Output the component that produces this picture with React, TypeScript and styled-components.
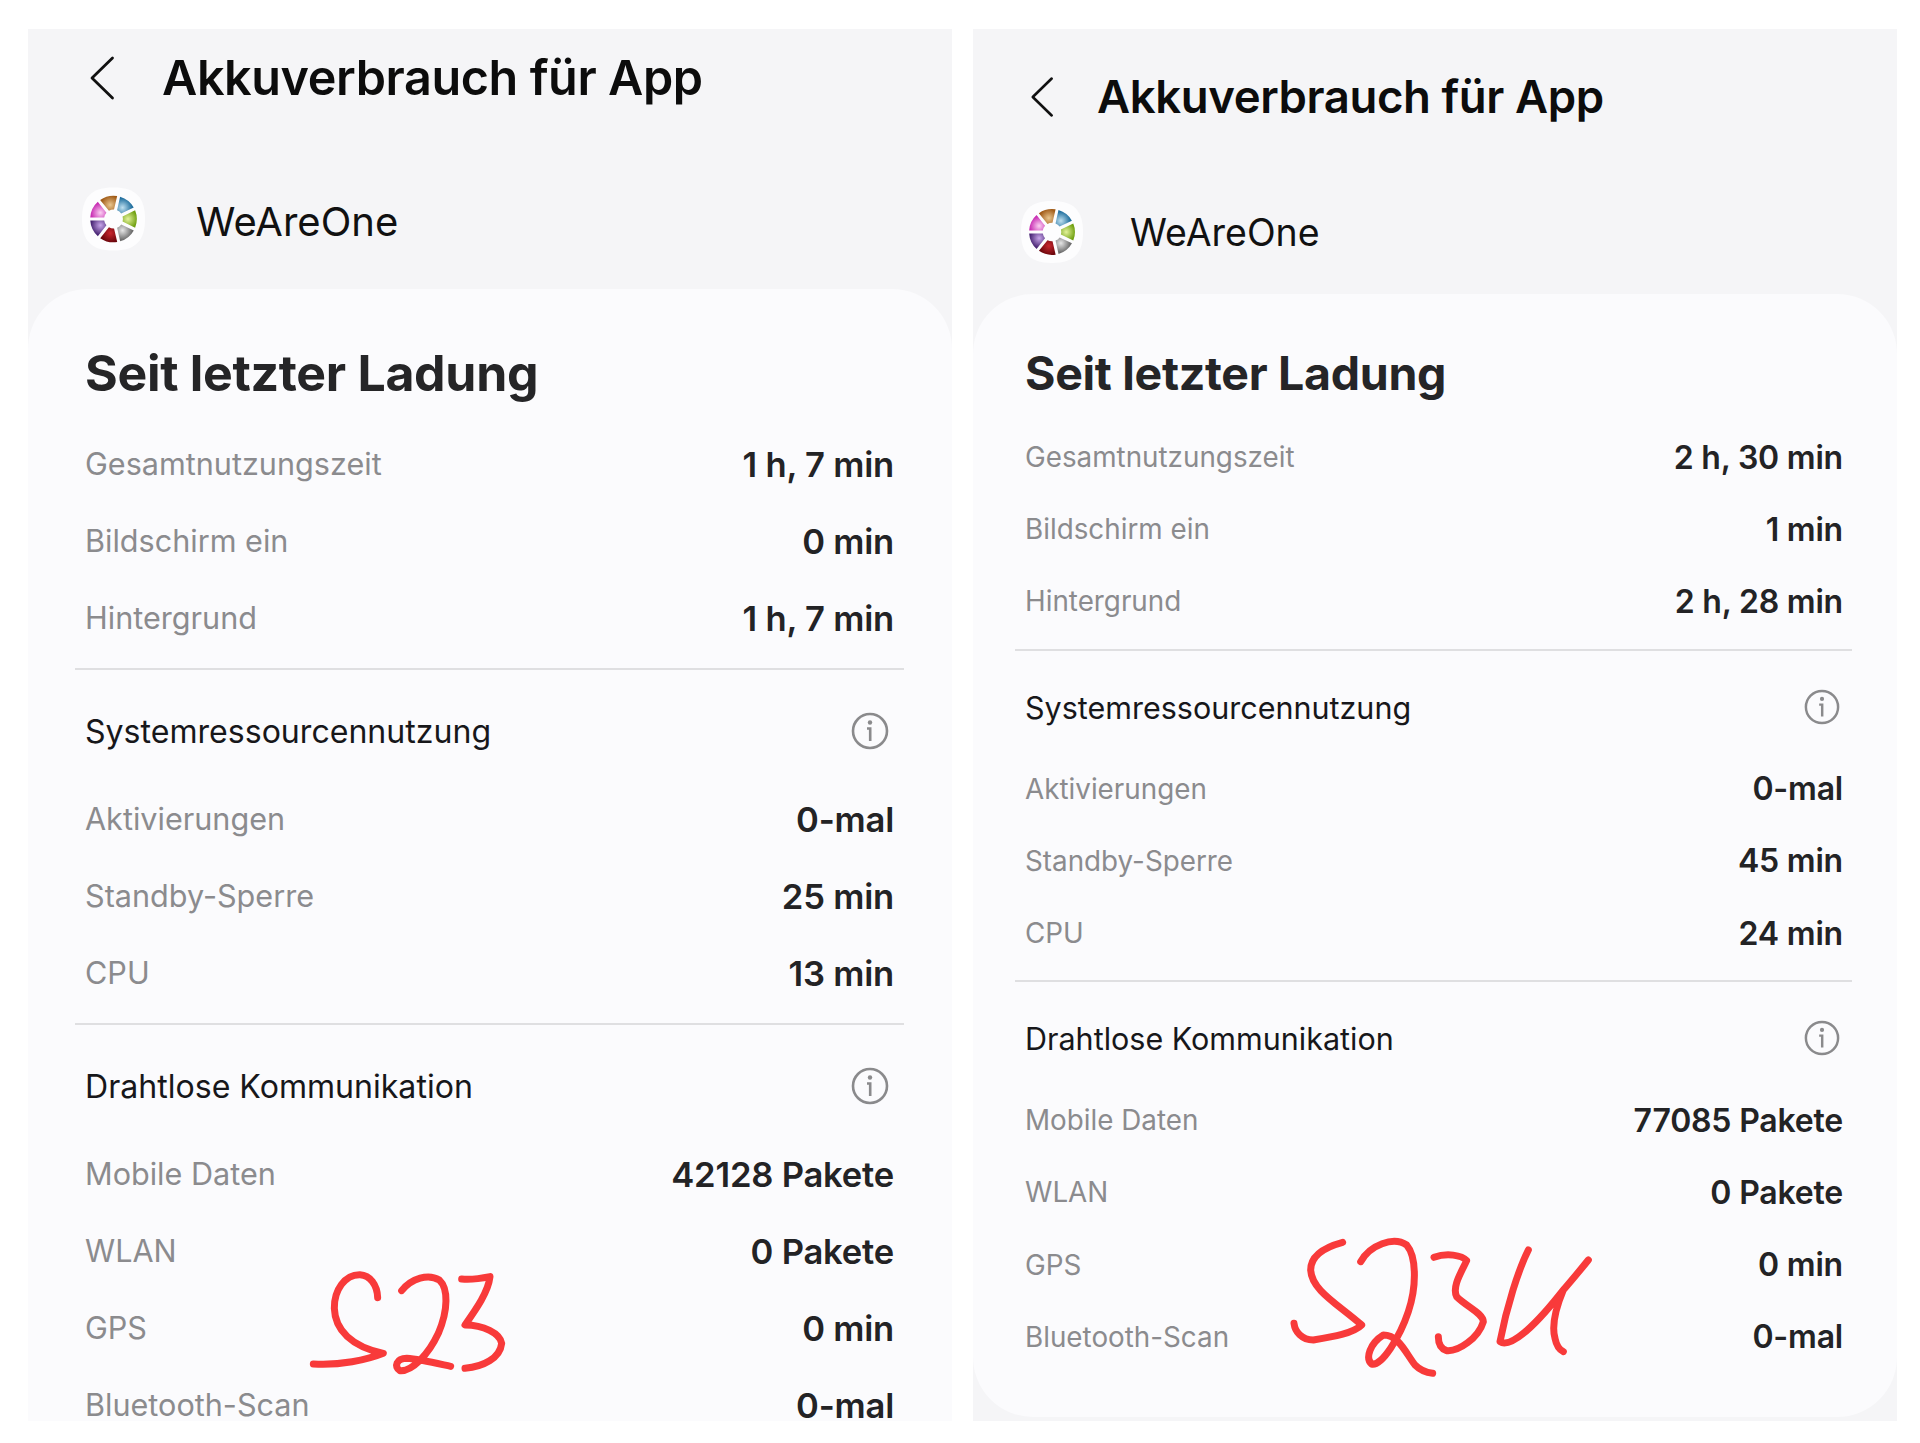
import React from "react";
import styled, { createGlobalStyle, ThemeProvider } from "styled-components";

const Global = createGlobalStyle`
  html, body { margin: 0; padding: 0; background: #fff; }
  body { font-family: Inter, "Noto Sans", sans-serif; }
`;

const left = {
  panelWidth: 924, headerH: 98, backPad: 61, backW: 26, backH: 44, backGap: 47,
  titleSize: 48.5, appH: 162, appTop: 60, appLeft: 54, iconW: 63, iconH: 64, appGap: 51, appSize: 40, nameDy: 3,
  cardPadL: 57, cardPadR: 58, cardTop: 54, bigSize: 50,
  rowsTop: 22, rowH: 77, rowSize: 30.6, valueSize: 34.6, dividerL: 10, dividerR: 10,
  divTop: 12, sectionTop: 38, sectionH: 110, sectionSize: 32.1, infoR: 5, infoSize: 38,
  cardH: 1140, bottomR: 0,
};
const right = {
  panelWidth: 924, headerH: 136, backPad: 57, backW: 24, backH: 42, backGap: 43,
  titleSize: 45.5, appH: 129, appTop: 36, appLeft: 48, iconW: 62, iconH: 62, appGap: 47, appSize: 37.5, nameDy: 1,
  cardPadL: 52, cardPadR: 54, cardTop: 49, bigSize: 46.5,
  rowsTop: 18, rowH: 72.2, rowSize: 27.8, valueSize: 32, dividerL: 10, dividerR: 9,
  divTop: 11, sectionTop: 33, sectionH: 102, sectionSize: 30.5, infoR: 3, infoSize: 36,
  cardH: 1123, bottomR: 60,
};

const Page = styled.main`
  display: flex;
  gap: 21px;
  width: 1920px;
  height: 1443px;
  padding: 29px 0 0 28px;
  box-sizing: border-box;
  background: #fff;
  overflow: hidden;
`;
const Panel = styled.section`
  position: relative;
  width: ${(p) => p.theme.panelWidth}px;
  height: 1392px;
  flex: none;
  background: #f5f5f7;
  overflow: hidden;
`;
const Header = styled.header`
  display: flex;
  align-items: center;
  height: ${(p) => p.theme.headerH}px;
  padding-left: ${(p) => p.theme.backPad}px;
  gap: ${(p) => p.theme.backGap}px;
`;
const BackIcon = styled.svg`
  width: ${(p) => p.theme.backW}px;
  height: ${(p) => p.theme.backH}px;
  flex: none;
`;
const Title = styled.h1`
  margin: 0;
  font-size: ${(p) => p.theme.titleSize}px;
  line-height: 60px;
  font-weight: 600;
  letter-spacing: -0.4px;
  color: #0c0c0c;
`;
const AppRow = styled.div`
  display: flex;
  align-items: flex-start;
  box-sizing: border-box;
  height: ${(p) => p.theme.appH}px;
  padding: ${(p) => p.theme.appTop}px 0 0 ${(p) => p.theme.appLeft}px;
  gap: ${(p) => p.theme.appGap}px;
`;
const AppIcon = styled.svg`
  width: ${(p) => p.theme.iconW}px;
  height: ${(p) => p.theme.iconH}px;
  flex: none;
`;
const AppName = styled.span`
  padding-top: ${(p) => p.theme.nameDy}px;
  font-size: ${(p) => p.theme.appSize}px;
  line-height: ${(p) => p.theme.iconH}px;
  color: #111;
`;
const Card = styled.div`
  box-sizing: border-box;
  height: ${(p) => p.theme.cardH}px;
  padding: ${(p) => p.theme.cardTop}px ${(p) => p.theme.cardPadR}px 0 ${(p) => p.theme.cardPadL}px;
  background: #fbfbfd;
  border-radius: 60px 60px ${(p) => p.theme.bottomR}px ${(p) => p.theme.bottomR}px;
`;
const CardTitle = styled.h2`
  margin: 0 0 ${(p) => p.theme.rowsTop}px;
  font-size: ${(p) => p.theme.bigSize}px;
  line-height: 60px;
  font-weight: 700;
  letter-spacing: -0.3px;
  color: #252527;
`;
const Row = styled.div`
  display: flex;
  align-items: center;
  justify-content: space-between;
  height: ${(p) => p.theme.rowH}px;
`;
const Label = styled.span`
  font-size: ${(p) => p.theme.rowSize}px;
  color: #8b8b8e;
`;
const Value = styled.span`
  font-size: ${(p) => p.theme.valueSize}px;
  font-weight: 600;
  letter-spacing: -0.2px;
  color: #232325;
`;
const Divider = styled.hr`
  height: 2px;
  border: 0;
  background: #dfdfe1;
  margin: ${(p) => p.theme.divTop}px -${(p) => p.theme.dividerR}px 0 -${(p) => p.theme.dividerL}px;
`;
const SectionHead = styled.div`
  display: flex;
  align-items: flex-start;
  justify-content: space-between;
  box-sizing: border-box;
  height: ${(p) => p.theme.sectionH}px;
  padding: ${(p) => p.theme.sectionTop}px ${(p) => p.theme.infoR}px 0 0;
`;
const SectionName = styled.span`
  font-size: ${(p) => p.theme.sectionSize}px;
  line-height: 48px;
  color: #17171a;
`;
const InfoIcon = styled.svg`
  width: ${(p) => p.theme.infoSize}px;
  height: 48px;
  margin-top: -1px;
  flex: none;
`;
const Scribble = styled.svg`
  position: absolute;
  left: ${(p) => p.$x}px;
  top: ${(p) => p.$y}px;
  width: ${(p) => p.$w}px;
  height: ${(p) => p.$h}px;
  fill: none;
  stroke: #f83a3a;
  stroke-linecap: round;
  stroke-linejoin: round;
`;

const wedges = [
  { a: 0, light: "#e3f29a", dark: "#6f9f10" },
  { a: 51.4, light: "#e6e6e6", dark: "#6e6e6e" },
  { a: 102.8, light: "#c8262e", dark: "#6c060c" },
  { a: 154.2, light: "#c8a6ea", dark: "#4a2775" },
  { a: 205.6, light: "#fbd0f2", dark: "#c92fb4" },
  { a: 257, light: "#e9c68e", dark: "#a05a16" },
  { a: 308.4, light: "#bfe0f0", dark: "#22709f" },
];

const polar = (r: number, deg: number) => {
  const t = (deg * Math.PI) / 180;
  return `${(100 + r * Math.cos(t)).toFixed(1)} ${(100 + r * Math.sin(t)).toFixed(1)}`;
};
const wedgePath = (a: number) => {
  const h = 22;
  return `M${polar(30, a - h + 6)} L${polar(74, a - h)} A74 74 0 0 1 ${polar(74, a + h)} L${polar(30, a + h - 6)} A30 30 0 0 0 ${polar(30, a - h + 6)}Z`;
};

function Logo({ id }: { id: string }) {
  return (
    <AppIcon viewBox="0 0 200 200" aria-hidden>
      <defs>
        {wedges.map((w, i) => (
          <radialGradient key={i} id={`${id}${i}`} gradientUnits="userSpaceOnUse"
            cx={100 + 46 * Math.cos((w.a * Math.PI) / 180)} cy={100 + 46 * Math.sin((w.a * Math.PI) / 180)} r="30">
            <stop offset="0" stopColor={w.light} />
            <stop offset="1" stopColor={w.dark} />
          </radialGradient>
        ))}
      </defs>
      <path d="M100 0C170 0 200 30 200 100S170 200 100 200 0 170 0 100 30 0 100 0Z" fill="#fdfdfe" />
      {wedges.map((w, i) => (
        <path key={i} d={wedgePath(w.a)} fill={`url(#${id}${i})`} />
      ))}
    </AppIcon>
  );
}

const Back = () => (
  <BackIcon viewBox="0 0 26 44" aria-hidden>
    <path d="M23.5 2 3 22l20.5 20" fill="none" stroke="#111" strokeWidth="2.8" strokeLinecap="round" strokeLinejoin="round" />
  </BackIcon>
);

const Info = () => (
  <InfoIcon viewBox="0 0 38 48" aria-hidden>
    <circle cx="19" cy="24" r="17" fill="none" stroke="#8a8a8c" strokeWidth="2.6" />
    <circle cx="19" cy="15.5" r="2.2" fill="#8a8a8c" />
    <path d="M16 21.5h3.2V34" fill="none" stroke="#8a8a8c" strokeWidth="2.6" />
  </InfoIcon>
);

type Item = [string, string];
const Rows = ({ items }: { items: Item[] }) => (
  <>
    {items.map(([l, v]) => (
      <Row key={l}>
        <Label>{l}</Label>
        <Value>{v}</Value>
      </Row>
    ))}
  </>
);

function Report({ theme, id, usage, system, wireless, children }: {
  theme: typeof left; id: string; usage: Item[]; system: Item[]; wireless: Item[]; children: React.ReactNode;
}) {
  return (
    <ThemeProvider theme={theme}>
      <Panel>
        <Header>
          <Back />
          <Title>Akkuverbrauch für App</Title>
        </Header>
        <AppRow>
          <Logo id={id} />
          <AppName>WeAreOne</AppName>
        </AppRow>
        <Card>
          <CardTitle>Seit letzter Ladung</CardTitle>
          <Rows items={usage} />
          <Divider />
          <SectionHead>
            <SectionName>Systemressourcennutzung</SectionName>
            <Info />
          </SectionHead>
          <Rows items={system} />
          <Divider />
          <SectionHead>
            <SectionName>Drahtlose Kommunikation</SectionName>
            <Info />
          </SectionHead>
          <Rows items={wireless} />
        </Card>
        {children}
      </Panel>
    </ThemeProvider>
  );
}

export default function App() {
  return (
    <>
      <Global />
      <Page>
        <Report
          theme={left}
          id="l"
          usage={[["Gesamtnutzungszeit", "1 h, 7 min"], ["Bildschirm ein", "0 min"], ["Hintergrund", "1 h, 7 min"]]}
          system={[["Aktivierungen", "0-mal"], ["Standby-Sperre", "25 min"], ["CPU", "13 min"]]}
          wireless={[["Mobile Daten", "42128 Pakete"], ["WLAN", "0 Pakete"], ["GPS", "0 min"], ["Bluetooth-Scan", "0-mal"]]}
        >
          <Scribble $x={252} $y={1201} $w={260} $h={213} viewBox="0 0 780 639" strokeWidth="21">
            <path d="M293 203C292 165 270 135 240 134C195 133 162 180 163 235C165 300 215 350 310 370C260 390 180 407 100 402" />
            <path d="M365 182C395 145 445 130 478 150C505 175 505 240 475 310C445 375 395 425 360 422C340 410 350 385 380 385C420 388 470 400 512 409" />
            <path d="M545 147C575 150 605 145 630 140C625 185 590 235 555 285C610 285 660 310 665 340C660 385 610 410 555 415" />
          </Scribble>
        </Report>
        <Report
          theme={right}
          id="r"
          usage={[["Gesamtnutzungszeit", "2 h, 30 min"], ["Bildschirm ein", "1 min"], ["Hintergrund", "2 h, 28 min"]]}
          system={[["Aktivierungen", "0-mal"], ["Standby-Sperre", "45 min"], ["CPU", "24 min"]]}
          wireless={[["Mobile Daten", "77085 Pakete"], ["WLAN", "0 Pakete"], ["GPS", "0 min"], ["Bluetooth-Scan", "0-mal"]]}
        >
          <Scribble $x={297} $y={1181} $w={350} $h={233} viewBox="0 0 1050 699" strokeWidth="21">
            <path d="M218 97C170 110 122 135 122 180C125 240 200 280 275 345C250 370 190 380 130 390C95 390 75 365 72 340" />
            <path d="M272 155C300 105 370 78 410 105C440 140 440 230 415 305C390 380 335 470 305 462C285 445 300 400 340 375C385 375 405 425 435 465C450 480 470 488 488 490" />
            <path d="M492 142C530 128 575 135 590 152C575 185 545 230 560 260C590 290 640 310 640 335C625 385 565 425 530 422C510 415 505 395 505 380" />
            <path d="M775 120C745 180 710 290 690 395C720 415 790 355 880 240C910 205 935 175 955 150M880 240C855 300 845 350 855 385C860 410 870 420 880 425" />
          </Scribble>
        </Report>
      </Page>
    </>
  );
}
